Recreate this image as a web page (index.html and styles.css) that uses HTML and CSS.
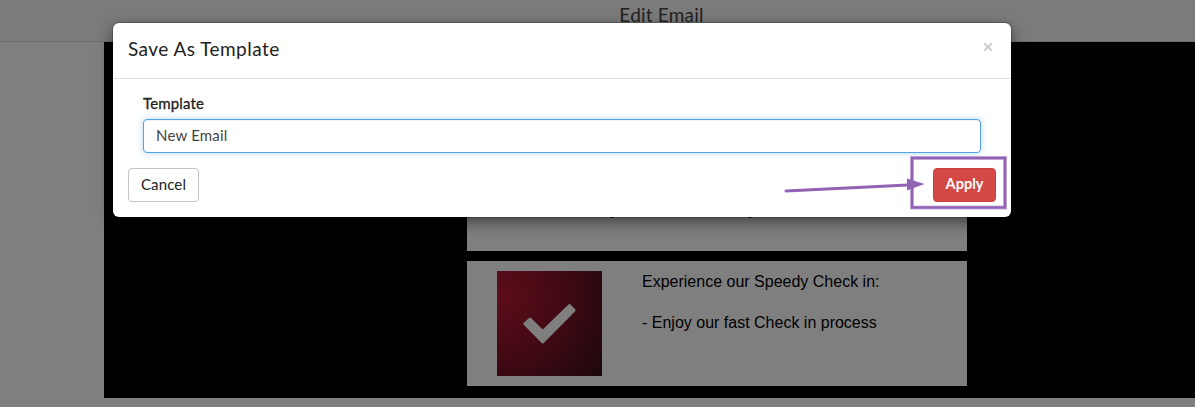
FILE: index.html
```html
<!DOCTYPE html>
<html lang="en">
<head>
<meta charset="utf-8">
<title>Edit Email</title>
<link rel="stylesheet" href="styles.css">
</head>
<body>
<div class="page">
  <header class="topbar"><h1 class="topbar-title">Edit Email</h1></header>
  <main class="canvas">
    <section class="block block-intro"><span>y</span><span>y</span></section>
    <section class="block block-checkin">
      <svg class="tile" viewBox="0 0 105 105" aria-hidden="true">
        <defs>
          <radialGradient id="red" gradientUnits="userSpaceOnUse" cx="0" cy="25" r="125">
            <stop offset="0" stop-color="#ba1a35"/>
            <stop offset=".5" stop-color="#851327"/>
            <stop offset="1" stop-color="#40101a"/>
          </radialGradient>
        </defs>
        <rect width="105" height="105" fill="url(#red)"/>
        <path d="M27 51.500 32 47Q33 46 34 47L45.700 58.500 71.500 33.500Q72.500 32.500 73.500 33.500L78 38Q79.200 39.200 78 40.400L46.700 72Q45.700 73 44.700 72L27 54Q25.500 52.700 27 51.500Z" fill="#fff"/>
      </svg>
      <div class="copy"><p>Experience our Speedy Check in:</p><p>- Enjoy our fast Check in process</p></div>
    </section>
  </main>
</div>
<div class="backdrop">
  <div class="modal" role="dialog" aria-labelledby="title">
    <div class="modal-header">
      <h2 class="modal-title" id="title">Save As Template</h2>
      <button class="close" aria-label="Close"><svg width="10" height="10" viewBox="0 0 10 10"><path d="M1.200 1.200 8.800 8.800M8.800 1.200 1.200 8.800" stroke="#ccc" stroke-width="2"/></svg></button>
    </div>
    <div class="modal-body">
      <label class="label" for="name">Template</label>
      <input class="field" id="name" value="New Email">
    </div>
    <div class="modal-footer">
      <button class="btn">Cancel</button>
      <button class="btn btn-apply">Apply</button>
    </div>
  </div>
</div>
<svg class="callout" width="1195" height="407" viewBox="0 0 1195 407" aria-hidden="true">
  <rect x="912" y="158" width="93" height="49.500" fill="none" stroke="#cdb3dc" stroke-width="4"/>
  <rect x="912" y="158" width="93" height="49.500" fill="none" stroke="#9163b4" stroke-width="2.400"/>
  <path d="M786 191 908 185" stroke="#9163b4" stroke-width="3" stroke-linecap="round"/>
  <path d="M907 178.500 924.500 184 907 190.500Z" fill="#9163b4"/>
</svg>
</body>
</html>
```
FILE: styles.css
```css
* { box-sizing: border-box; }
body { margin: 0; height: 407px; overflow: hidden; font-family: Lato, "Open Sans", sans-serif; color: #222; background: #fff; }
.page { display: flex; flex-direction: column; height: 407px; }
.topbar { height: 42px; background: #f6f6f6; border-bottom: 1px solid #dcdcdc; text-align: center; }
.topbar-title { margin: 0; padding: 3px 0 0 128px; font-size: 19px; line-height: 24px; font-weight: 400; letter-spacing: .2px; color: #444; }
.canvas { margin-left: 104px; height: 356px; padding: 0 228px 12px 363px; background: #000; display: flex; flex-direction: column; justify-content: flex-end; gap: 10px; }
.block { width: 500px; background: #fff; font-family: "Liberation Sans", Arial, sans-serif; font-size: 16px; color: #000; }
.block-intro { height: 75px; padding: 25px 211px 0 143px; display: flex; justify-content: space-between; line-height: 18px; }
.block-checkin { height: 125px; padding: 10px 30px; display: flex; gap: 40px; }
.tile { width: 105px; height: 105px; flex: none; }
.copy { padding-top: 1px; line-height: 20.500px; }
.copy p { margin: 0 0 20.500px; white-space: nowrap; }
.backdrop { position: absolute; inset: 0; background: rgba(0, 0, 0, .5); padding: 23px 184px 0 113px; }
.modal { width: 898px; height: 194px; background: #fff; border-radius: 6px; box-shadow: 0 5px 15px rgba(0, 0, 0, .5), 0 0 0 1px rgba(0, 0, 0, .2); }
.modal-header { height: 56px; padding: 0 18px 0 15px; border-bottom: 1px solid #e0e0e0; display: flex; align-items: center; justify-content: space-between; }
.modal-title { margin: 0; padding-bottom: 3px; font-size: 19px; line-height: 24px; font-weight: 400; letter-spacing: .45px; }
.close { display: flex; padding: 0; border: 0; background: none; margin-bottom: 7px; }
.modal-body { padding: 14px 30px 0; }
.label { display: block; height: 26px; font-size: 15px; line-height: 20px; font-weight: 400; letter-spacing: .15px; -webkit-text-stroke: .3px #222; }
.field { display: block; width: 838px; height: 34px; padding: 0 12px 3px; border: 1px solid #55a5e5; border-radius: 4px; outline: none; box-shadow: inset 0 1px 1px rgba(0, 0, 0, .05), 0 0 6px rgba(102, 175, 233, .5); font: 15px Lato, sans-serif; letter-spacing: .2px; color: #444; }
.modal-footer { display: flex; justify-content: space-between; padding: 15px 15px 0; }
.btn { width: 71px; height: 34px; padding: 0 0 3px; border: 1px solid #c5c5c5; border-radius: 4px; background: #fff; color: #222; font: 15px Lato, sans-serif; letter-spacing: .15px; }
.btn-apply { width: 63px; border-color: #cd3e3c; background: #d44846; color: #fff; font-size: 14.500px; font-weight: 700; letter-spacing: 0; }
.callout { position: absolute; inset: 0; pointer-events: none; }
```
